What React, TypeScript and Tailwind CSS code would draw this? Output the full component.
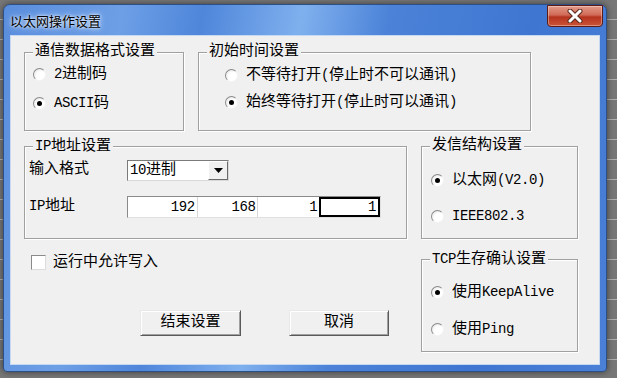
import React from 'react'

const font = "font-['Liberation_Mono','Noto_Sans_CJK_SC',monospace]"

// CJK glyphs are 15px wide in the original, half-width ones only 8px
const Txt: React.FC<{ s: string }> = ({ s }) => (
  <>
    {s.split(/([\x00-\x7f]+)/).filter(Boolean).map((part, i) =>
      /^[\x00-\x7f]+$/.test(part) ? (
        <span key={i} className="text-[14px] tracking-[-0.4px]">{part}</span>
      ) : (
        <span key={i}>{part}</span>
      )
    )}
  </>
)

interface GroupProps {
  title: string
  className: string
  children?: React.ReactNode
}

const Group: React.FC<GroupProps> = ({ title, className, children }) => (
  <div className={`relative border border-[#a0a0a0] shadow-[inset_1px_1px_0_#fff,1px_1px_0_#fff] ${className}`}>
    <span className="absolute -top-[11px] left-[8px] bg-[#f0f0f0] px-[2px] leading-[20px]"><Txt s={title} /></span>
    {children}
  </div>
)

const Radio: React.FC<{ checked?: boolean; label: string }> = ({ checked, label }) => (
  <div className="flex items-center h-[20px]">
    <span className="w-[13px] h-[13px] rounded-full border border-t-[#8a8a8a] border-l-[#8a8a8a] border-b-[#f4f4f4] border-r-[#f4f4f4] bg-[radial-gradient(circle_at_65%_65%,#ffffff_45%,#dcdcdc)] flex items-center justify-center">
      {checked && <span className="w-[5px] h-[5px] rounded-full bg-black" />}
    </span>
    <span className="ml-[8px] leading-[20px] whitespace-nowrap"><Txt s={label} /></span>
  </div>
)

const Button: React.FC<{ label: string; className: string }> = ({ label, className }) => (
  <div
    className={`h-[26px] flex items-center justify-center bg-[#f0f0f0] border border-t-[#e8e8e8] border-l-[#e8e8e8] border-b-[#5a5a5a] border-r-[#5a5a5a] shadow-[inset_1px_1px_0_#ffffff,inset_-1px_-1px_0_#a0a0a0] ${className}`}
  >
    {label}
  </div>
)

const App: React.FC = () => {
  return (
    <div className={`w-[617px] h-[378px] overflow-hidden bg-[repeating-linear-gradient(180deg,#777777_0px,#777777_19px,#b0b0b0_19px,#b0b0b0_20px)] text-[15px] text-black ${font}`}>
      <div className="ml-[3px] mt-[4px] w-[604px] h-[368px] flex flex-col rounded-t-[7px] rounded-b-[4px] border border-[#2c4f86] bg-[linear-gradient(100deg,#5a8edd_0%,#6d9fe6_18%,#4f86da_30%,#7fb0ee_45%,#4c83d8_58%,#3f76d1_80%,#4a80d6_100%)] shadow-[0_0_6px_rgba(0,0,0,0.5)]">
        {/* title bar */}
        <div className="h-[31px] flex items-start justify-between">
          <span className="mt-[7px] ml-[6px] text-[13px] leading-[18px] font-['Noto_Sans_CJK_SC',sans-serif] [text-shadow:0_0_6px_#ffffff,0_0_3px_#ffffff]">
            以太网操作设置
          </span>
          <div className="mt-[0px] mr-[3px] w-[56px] h-[22px] rounded-b-[4px] border border-[#5c1b14] bg-[linear-gradient(180deg,#e29a88_0%,#d06a56_45%,#b5331d_55%,#cc5438_100%)] shadow-[inset_0_0_0_1px_rgba(255,255,255,0.35)] flex items-center justify-center">
            <svg width="16" height="14" viewBox="0 0 16 14">
              <path d="M3 2 L13 12 M13 2 L3 12" stroke="#5a2a20" strokeWidth="5" strokeLinecap="round" />
              <path d="M3 2 L13 12 M13 2 L3 12" stroke="#ffffff" strokeWidth="3" strokeLinecap="round" />
            </svg>
          </div>
        </div>

        {/* client area */}
        <div className="ml-[7px] w-[588px] h-[328px] bg-[#f0f0f0] shadow-[0_0_0_1px_#c6d8f2] pl-[13px] pt-[16px] flex flex-col">
          <div className="flex gap-[14px]">
            <Group title="通信数据格式设置" className="w-[160px] h-[79px] pl-[8px] pt-[11px] flex flex-col gap-[9px]">
              <Radio label="2进制码" />
              <Radio checked label="ASCII码" />
            </Group>
            <Group title="初始时间设置" className="w-[333px] h-[79px] pl-[26px] pt-[12px] flex flex-col gap-[7px]">
              <Radio label="不等待打开(停止时不可以通讯)" />
              <Radio checked label="始终等待打开(停止时可以通讯)" />
            </Group>
          </div>

          <div className="flex gap-[14px] mt-[15px]">
            <Group title="IP地址设置" className="w-[383px] h-[93px] pl-[4px] pt-[12px] flex flex-col">
              <div className="flex items-center h-[22px]">
                <span className="w-[98px]">输入格式</span>
                <div className="w-[102px] h-[21px] flex bg-white border border-t-[#7a7a7a] border-l-[#7a7a7a] border-b-[#d8d8d8] border-r-[#d8d8d8]">
                  <span className="flex-1 pl-[2px] leading-[19px]"><Txt s="10进制" /></span>
                  <div className="w-[20px] h-[19px] flex items-center justify-center bg-[#f0f0f0] border border-t-white border-l-white border-b-[#6a6a6a] border-r-[#6a6a6a]">
                    <svg width="9" height="5" viewBox="0 0 9 5">
                      <path d="M0 0 H9 L4.5 5 Z" fill="#000" />
                    </svg>
                  </div>
                </div>
              </div>
              <div className="flex items-center h-[22px] mt-[15px]">
                <span className="w-[98px]"><Txt s="IP地址" /></span>
                <div className="w-[254px] h-[22px] flex bg-white border border-t-[#8a8a8a] border-l-[#8a8a8a] border-b-[#e0e0e0] border-r-[#e0e0e0] text-[14px] tracking-[-0.4px]">
                  <span className="w-[70px] text-right pr-[2px] leading-[20px] border-r border-[#d8d8d8]">192</span>
                  <span className="w-[61px] text-right pr-[2px] leading-[20px] border-r border-[#d8d8d8]">168</span>
                  <span className="w-[61px] text-right pr-[2px] leading-[20px]">1</span>
                  <span className="w-[61px] text-right pr-[2px] leading-[16px] border-2 border-black">1</span>
                </div>
              </div>
            </Group>
            <Group title="发信结构设置" className="w-[157px] h-[93px] pl-[9px] pt-[23px] flex flex-col gap-[16px]">
              <Radio checked label="以太网(V2.0)" />
              <Radio label="IEEE802.3" />
            </Group>
          </div>

          <div className="flex gap-[14px]">
            <div className="w-[383px] flex flex-col">
              <div className="flex items-center mt-[16px] ml-[7px] h-[15px]">
                <span className="w-[15px] h-[15px] bg-white border border-t-[#8a8a8a] border-l-[#8a8a8a] border-b-[#dcdcdc] border-r-[#dcdcdc]" />
                <span className="ml-[7px] leading-[15px]">运行中允许写入</span>
              </div>
              <div className="flex mt-[40px] ml-[116px] gap-[48px]">
                <Button label="结束设置" className="w-[101px]" />
                <Button label="取消" className="w-[100px]" />
              </div>
            </div>
            <Group title="TCP生存确认设置" className="mt-[20px] w-[157px] h-[93px] pl-[9px] pt-[22px] flex flex-col gap-[17px]">
              <Radio checked label="使用KeepAlive" />
              <Radio label="使用Ping" />
            </Group>
          </div>
        </div>
      </div>
    </div>
  )
}

export default App
